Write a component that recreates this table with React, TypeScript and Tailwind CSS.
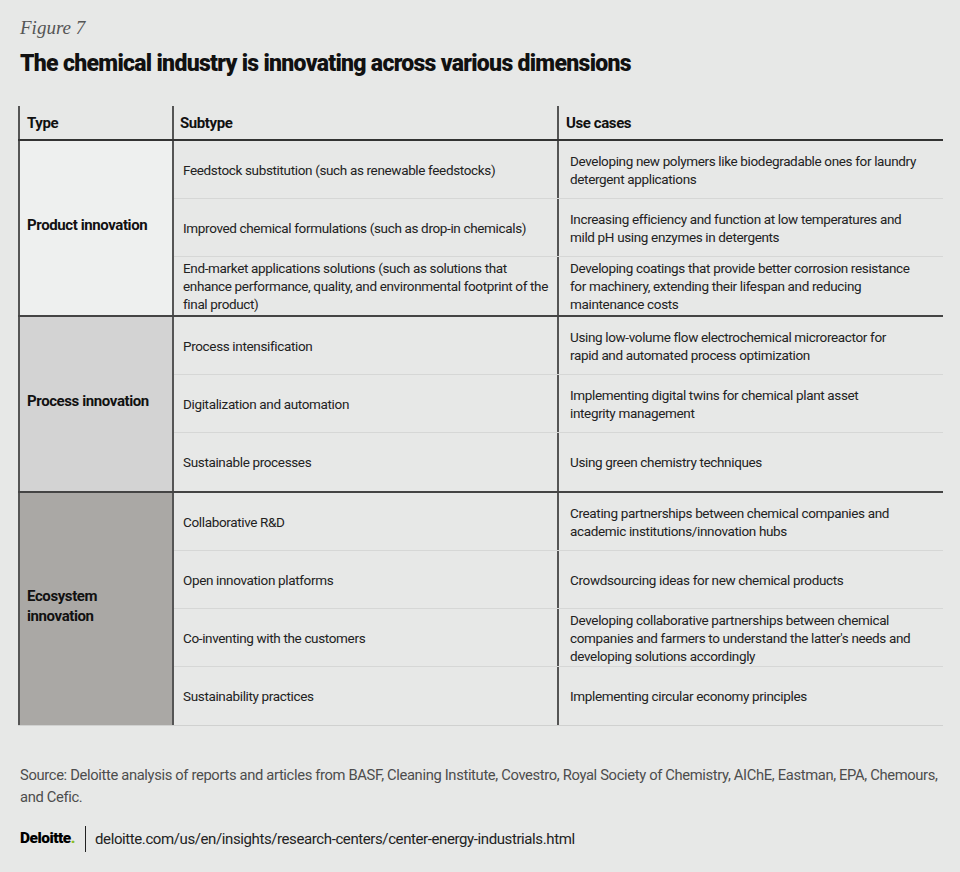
import React from "react";

type Row = { sub: string; use: string };
type Group = { type: string; bg: string; rows: Row[] };

const groups: Group[] = [
  {
    type: "Product innovation",
    bg: "bg-[#eef0ef]",
    rows: [
      {
        sub: "Feedstock substitution (such as renewable feedstocks)",
        use: "Developing new polymers like biodegradable ones for laundry\ndetergent applications",
      },
      {
        sub: "Improved chemical formulations (such as drop-in chemicals)",
        use: "Increasing efficiency and function at low temperatures and\nmild pH using enzymes in detergents",
      },
      {
        sub: "End-market applications solutions (such as solutions that\nenhance performance, quality, and environmental footprint of the\nfinal product)",
        use: "Developing coatings that provide better corrosion resistance\nfor machinery, extending their lifespan and reducing\nmaintenance costs",
      },
    ],
  },
  {
    type: "Process innovation",
    bg: "bg-[#d3d3d3]",
    rows: [
      {
        sub: "Process intensification",
        use: "Using low-volume flow electrochemical microreactor for\nrapid and automated process optimization",
      },
      {
        sub: "Digitalization and automation",
        use: "Implementing digital twins for chemical plant asset\nintegrity management",
      },
      { sub: "Sustainable processes", use: "Using green chemistry techniques" },
    ],
  },
  {
    type: "Ecosystem\ninnovation",
    bg: "bg-[#aaa8a5]",
    rows: [
      {
        sub: "Collaborative R&D",
        use: "Creating partnerships between chemical companies and\nacademic institutions/innovation hubs",
      },
      { sub: "Open innovation platforms", use: "Crowdsourcing ideas for new chemical products" },
      {
        sub: "Co-inventing with the customers",
        use: "Developing collaborative partnerships between chemical\ncompanies and farmers to understand the latter's needs and\ndeveloping solutions accordingly",
      },
      { sub: "Sustainability practices", use: "Implementing circular economy principles" },
    ],
  },
];

export default function App() {
  return (
    <div className="w-[960px] h-[872px] bg-[#e7e8e7] px-[18px] pt-[16px] font-['Roboto',sans-serif] text-[#222]">
      <p className="ml-[2px] font-['Liberation_Serif',serif] italic text-[19px] leading-[24px] text-[#555]">
        Figure 7
      </p>
      <h1 className="ml-[2px] mt-[9px] text-[23px] leading-[30px] font-black tracking-[-0.7px] text-[#111]">
        The chemical industry is innovating across various dimensions
      </h1>

      <div className="mt-[27px] w-[925px]">
        <div className="flex h-[35px] border-b-2 border-[#333] text-[15px] font-bold tracking-[-0.4px] text-[#111]">
          <div className="w-[156px] border-l-2 border-r-2 border-[#555] px-[7px] pt-[2px] flex items-center">Type</div>
          <div className="w-[383px] px-[6px] pt-[2px] flex items-center">Subtype</div>
          <div className="flex-1 border-l-2 border-[#555] px-[7px] pt-[2px] flex items-center">Use cases</div>
        </div>

        {groups.map((g, gi) => (
          <div
            key={g.type}
            className={
              gi === groups.length - 1
                ? "flex border-b border-[#d0d1d0]"
                : "flex border-b-2 border-[#444]"
            }
          >
            <div
              className={`w-[156px] shrink-0 border-l-2 border-r-2 border-[#555] px-[7px] pb-[6px] flex items-center ${g.bg} text-[15px] leading-[20px] font-bold tracking-[-0.4px] text-[#111] whitespace-pre-line`}
            >
              {g.type}
            </div>
            <div className="flex-1 flex flex-col">
              {g.rows.map((r, ri) => (
                <div
                  key={r.sub}
                  className={
                    ri === g.rows.length - 1
                      ? "flex h-[58px]"
                      : "flex h-[58px] border-b border-[#d6d7d6]"
                  }
                >
                  <div className="w-[383px] px-[9px] flex items-center text-[13.5px] leading-[18px] tracking-[-0.35px] whitespace-pre-line">
                    {r.sub}
                  </div>
                  <div className="flex-1 border-l-2 border-[#555] px-[11px] flex items-center text-[13.5px] leading-[18px] tracking-[-0.35px] whitespace-pre-line">
                    {r.use}
                  </div>
                </div>
              ))}
            </div>
          </div>
        ))}
      </div>

      <p className="mt-[38px] ml-[2px] text-[14.75px] leading-[22px] tracking-[-0.35px] text-[#4d4d4d]">
        Source: Deloitte analysis of reports and articles from BASF, Cleaning Institute, Covestro, Royal Society of Chemistry, AIChE, Eastman, EPA, Chemours,
        <br />
        and Cefic.
      </p>

      <div className="mt-[18px] ml-[2px] flex items-center h-[26px]">
        <span className="text-[15.5px] font-black tracking-[-0.5px] text-black">
          Deloitte<span className="text-[#86bc25]">.</span>
        </span>
        <div className="ml-[10px] w-px h-[26px] bg-[#222]" />
        <span className="ml-[9px] text-[15px] tracking-[-0.4px] text-[#222]">
          deloitte.com/us/en/insights/research-centers/center-energy-industrials.html
        </span>
      </div>
    </div>
  );
}
